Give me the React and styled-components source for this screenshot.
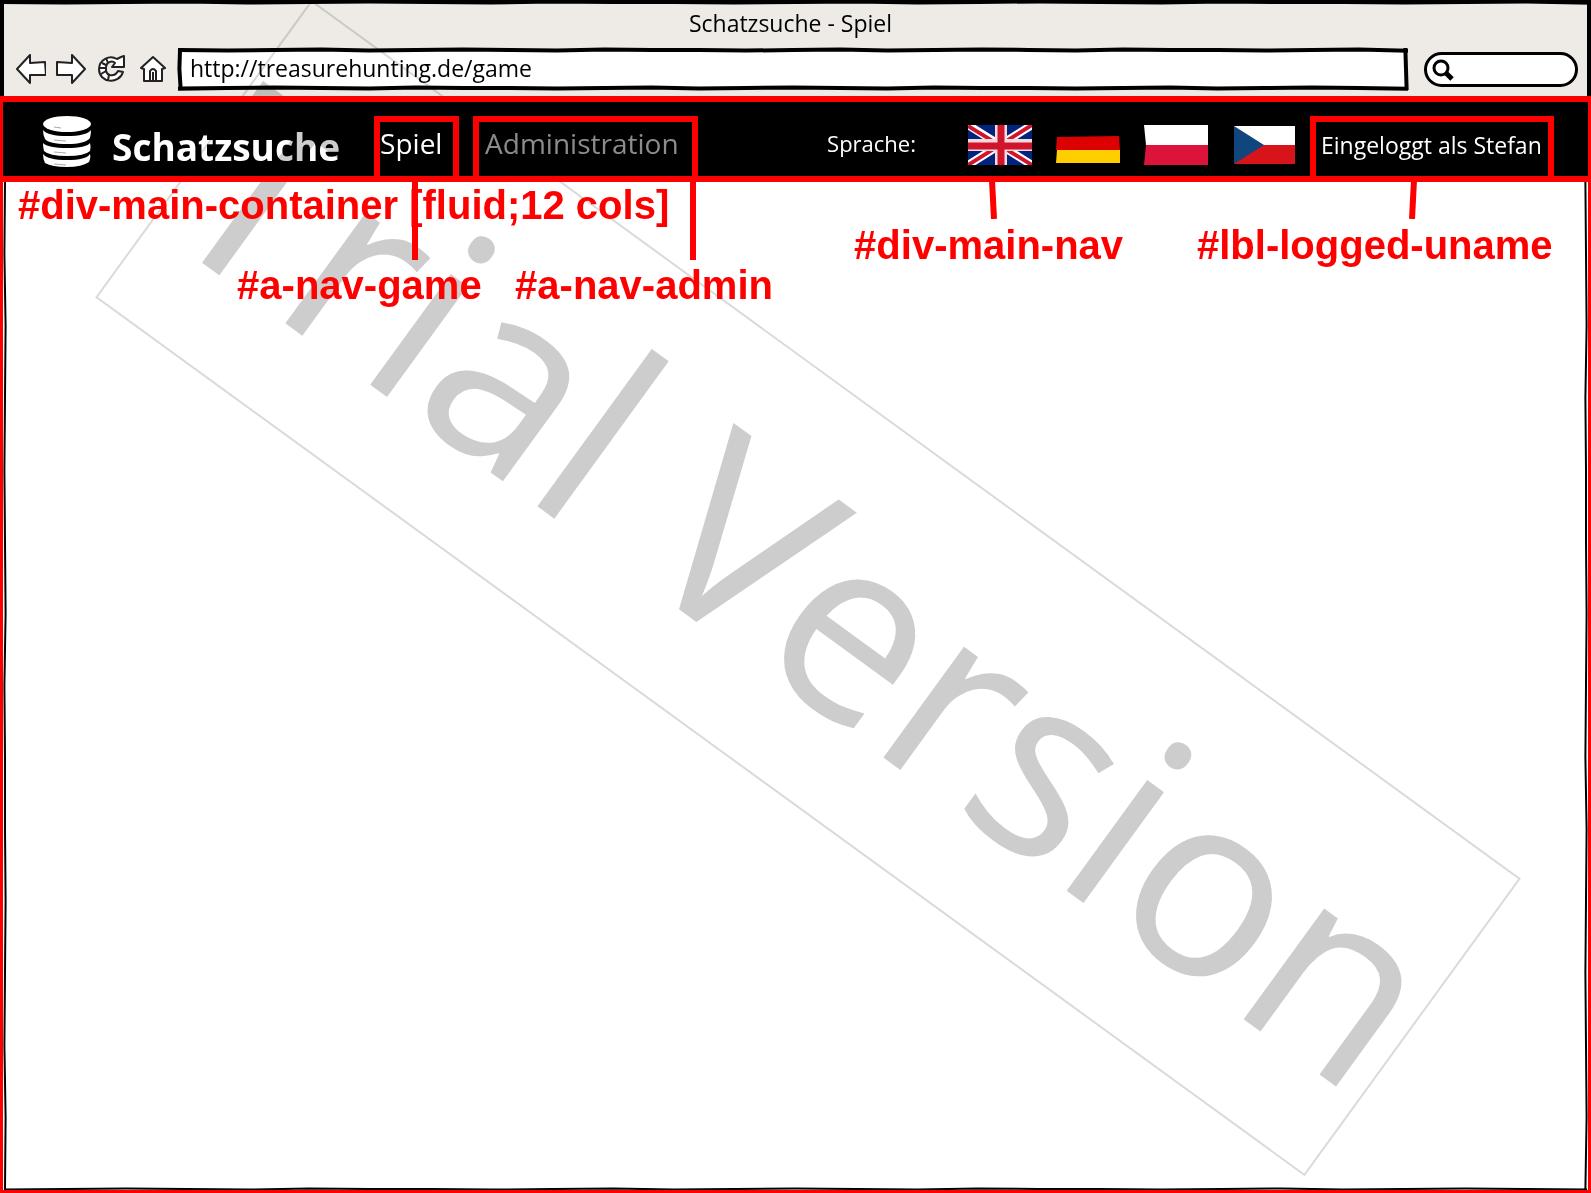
import React from "react";
import styled, { createGlobalStyle, css } from "styled-components";

const RED = "#ff0000";
const UI_FONT = '"Open Sans", "Noto Sans", sans-serif';
const NOTE_FONT = '"Liberation Sans", Arial, sans-serif';

const GlobalStyle = createGlobalStyle`
  *, *::before, *::after { box-sizing: border-box; }
  body { margin: 0; background: #fff; font-family: ${UI_FONT}; }
`;

/* ---------- page shell ---------- */

const Page = styled.div`
  position: relative;
  display: flex;
  flex-direction: column;
  min-height: 100vh;
  overflow: hidden;
  isolation: isolate;
  background: #fff;
`;

const Chrome = styled.header`
  position: relative;
  display: flex;
  flex-direction: column;
  height: 96px;
  background: #eeebe7;
  border-left: 4px solid #000;
  border-right: 4px solid #000;
`;

const WindowTitle = styled.div`
  padding: 7px 10px 0 0;
  font-size: 23px;
  line-height: 32px;
  text-align: center;
  color: #000;
`;

const Toolbar = styled.div`
  display: flex;
  align-items: center;
  gap: 14px;
  margin-top: 11px;
  padding: 0 9px 0 12px;
`;

const Actions = styled.div`
  display: flex;
  align-items: center;
  gap: 10px;
`;

const IconButton = styled.button`
  display: flex;
  padding: 0;
  border: 0;
  background: none;
  cursor: pointer;
`;

const Field = styled.label`
  position: relative;
  display: flex;
  align-items: center;
  height: 38px;
  flex: ${(p) => (p.$grow ? "1" : "0 0 auto")};
  ${(p) => p.$round && css`
    width: 154px;
    height: 35px;
    margin-left: 4px;
    padding-left: 36px;
    background: #fff;
    border: 3px solid #000;
    border-radius: 18px;
  `}
`;

const FieldInput = styled.input`
  width: 100%;
  min-width: 0;
  height: 100%;
  padding: 0 10px 2px;
  border: 0;
  outline: 0;
  background: ${(p) => (p.$clear ? "transparent" : "#fff")};
  font: 23px ${UI_FONT};
  color: #000;
`;

const SearchGlyph = styled.svg`
  position: absolute;
  left: 4px;
  top: 3px;
`;

const Sketch = styled.svg`
  position: absolute;
  inset: 0;
  width: 100%;
  height: 100%;
  overflow: visible;
  pointer-events: none;
`;

/* ---------- navigation ---------- */

const frame = css`
  &::after {
    content: "";
    position: absolute;
    inset: 0;
    z-index: 3;
    border: 6px solid ${RED};
    pointer-events: none;
  }
`;

const NavBar = styled.nav`
  position: relative;
  display: flex;
  align-items: stretch;
  height: 86px;
  padding: 20px 37px 0 42px;
  background: #000;
  color: #fff;
  ${frame}
  &::after { border-left-width: 3px; border-right-width: 3px; }
`;

const Brand = styled.a`
  display: flex;
  gap: 20px;
  color: #fff;
  font-size: 37px;
  font-weight: 700;
  line-height: 62px;
  text-decoration: none;
`;

const NavLinks = styled.div`
  display: flex;
  gap: 14px;
  margin-left: 34px;
`;

const NavLink = styled.a`
  position: relative;
  width: ${(p) => p.$width}px;
  padding-left: ${(p) => p.$pad}px;
  font-size: 28px;
  line-height: 54px;
  color: ${(p) => (p.$active ? "#fff" : "#8c8c8c")};
  text-decoration: none;
  white-space: nowrap;
  ${frame}
`;

const Languages = styled.div`
  position: relative;
  display: flex;
  gap: 52px;
  margin-left: auto;
  font-size: 22px;
  line-height: 54px;
`;

const Flags = styled.div`
  display: flex;
  align-items: flex-start;
  gap: 24px;
  padding-top: 9px;
`;

const Account = styled.div`
  position: relative;
  width: 244px;
  margin-left: 14px;
  padding-left: 11px;
  font-size: 23px;
  line-height: 58px;
  white-space: nowrap;
  ${frame}
`;

/* ---------- annotations ---------- */

const Note = styled.span`
  position: absolute;
  z-index: 3;
  top: ${(p) => p.$top}px;
  left: ${(p) => p.$left}px;
  font: 700 40px/46px ${NOTE_FONT};
  color: ${RED};
  white-space: nowrap;
`;

const Leader = styled.svg`
  position: absolute;
  z-index: 3;
  top: 66px;
  left: ${(p) => p.$left}px;
  stroke: ${RED};
  stroke-width: 6;
`;

const Content = styled.main`
  position: relative;
  flex: 1;
  &::after {
    content: "";
    position: absolute;
    inset: 0;
    z-index: 3;
    border: 3px solid ${RED};
    border-top: 0;
    pointer-events: none;
  }
`;

const ContentEdge = styled.div`
  position: absolute;
  inset: 0 5px 4px;
`;

const Watermark = styled.div`
  position: absolute;
  z-index: 2;
  left: calc(50% + 12px);
  top: calc(50% - 9px);
  width: 1495px;
  height: 368px;
  display: flex;
  justify-content: center;
  border: 2px solid #dadada;
  font-size: 256px;
  line-height: 352px;
  color: #cdcdcd;
  white-space: nowrap;
  mix-blend-mode: multiply;
  pointer-events: none;
  transform: translate(-50%, -50%) rotate(36deg);
`;

/* Hand-drawn line: runs from a to b with a small periodic wobble. */
const wobble = [0, 1, 0, -1, 1, 0, -1, 0, 1, -1, 0];

function edge(steps, horizontal, at, seed) {
  return Array.from({ length: steps + 1 }, (_, i) => {
    const along = (i / steps) * 1000;
    const off = at + wobble[(i + seed) % wobble.length] * 0.6;
    return horizontal ? [along, off] : [off, along];
  });
}

function SketchEdge({ sides = "trbl", width = 3, bends = 14 }) {
  const place = {
    t: { x: 0, y: 0, w: "100%", h: 6, pts: edge(26, true, 3, 0) },
    b: { x: 0, y: "100%", w: "100%", h: 6, pts: edge(26, true, 3, 4) },
    l: { x: 0, y: 0, w: 6, h: "100%", pts: edge(bends, false, 3, 2) },
    r: { x: "100%", y: 0, w: 6, h: "100%", pts: edge(bends, false, 3, 6) },
  };
  return (
    <Sketch aria-hidden="true">
      {sides.split("").map((s) => {
        const e = place[s];
        const flat = s === "t" || s === "b";
        return (
          <g key={s} transform={flat ? "translate(0 -3)" : "translate(-3 0)"}>
            <svg
              x={e.x}
              y={e.y}
              width={e.w}
              height={e.h}
              viewBox={flat ? "0 0 1000 6" : "0 0 6 1000"}
              preserveAspectRatio="none"
              overflow="visible"
            >
              <polyline
                points={e.pts.map((p) => p.join(",")).join(" ")}
                fill="none"
                stroke="#000"
                strokeWidth={width}
                strokeLinecap="square"
                vectorEffect="non-scaling-stroke"
              />
            </svg>
          </g>
        );
      })}
    </Sketch>
  );
}

/* ---------- drawings ---------- */

const line = { fill: "#fff", stroke: "#222", strokeWidth: 2, strokeLinejoin: "round" };

const BackIcon = () => (
  <svg width="30" height="30" viewBox="0 0 30 30" {...line}>
    <path d="M1 15 14 1l0 8 15-1 1 13-16 0v8Z" />
  </svg>
);

const ForwardIcon = () => (
  <svg width="30" height="30" viewBox="0 0 30 30" {...line}>
    <path d="M29 15 16 1l0 8-15-1 0 13 15 0 0 8Z" />
  </svg>
);

const ReloadIcon = () => (
  <svg width="30" height="30" viewBox="0 0 30 30" {...line}>
    <path d="M21 5A12 12 0 0 0 3 15c0 14 20 16 24 3l-5-1c-4 7-13 5-12-3 0-6 6-8 9-5l-3 4 12 0 0-11-3 1Z" />
    <path d="M6 9l4 2M4 14h5M5 20l5-3M10 4l2 5M12 26l1-5" fill="none" />
  </svg>
);

const HomeIcon = () => (
  <svg width="30" height="30" viewBox="0 0 30 30" {...line}>
    <path d="M5 14 17 3l12 11-3 1v12H8V15Z" />
    <path d="M14 26v-9q3-4 6 0v9M17 18v8" />
  </svg>
);

const CoinsIcon = () => (
  <svg width="50" height="54" viewBox="0 0 50 54" fill="#fff" aria-hidden="true">
    <ellipse cx="25" cy="8" rx="24" ry="8" />
    <path d="M1 14q5 6 24 6t24-6q0 3-1 8-5 6-23 6T3 23Q1 19 1 14Z" />
    <path d="M1 27q5 5 24 5t23-5q1 3 0 8-5 5-23 5T2 35Q1 31 1 27Z" />
    <path d="M1 38q5 6 24 6t23-6q1 3-1 8-7 5-22 5T3 47Q1 43 1 38Z" />
    <path d="M12 11l7 1M12 24l12 1M12 36l12 1M12 48l12 1" stroke="#aaa" />
  </svg>
);

const BritishFlag = () => (
  <svg width="64" height="40" viewBox="0 0 64 40">
    <path d="M0 0h64v40H0Z" fill="#00247d" />
    <path d="m0 0 64 40M64 0 0 40" stroke="#fff" strokeWidth="8" />
    <path d="m0 1 64 39M64 0 0 40" stroke="#cf142b" strokeWidth="4" />
    <path d="M33 0v40M0 20h64" stroke="#f4d9dd" strokeWidth="12" />
    <path d="M33 0v40M0 21h64" stroke="#cf142b" strokeWidth="7" />
  </svg>
);

const GermanFlag = () => (
  <svg width="64" height="40" viewBox="0 0 64 40">
    <path d="M0 0h64v12H0Z" fill="#000" />
    <path d="m1 12 62-1 1 14H0Z" fill="#dd0000" />
    <path d="m1 25 63 0v13H0Z" fill="#ffce00" />
  </svg>
);

const PolishFlag = () => (
  <svg width="64" height="40" viewBox="0 0 64 40">
    <path d="M0 0h64v20H2Z" fill="#fff" />
    <path d="M2 20h62v20H0Z" fill="#dc143c" />
  </svg>
);

const CzechFlag = () => (
  <svg width="64" height="40" viewBox="0 0 64 40">
    <path d="M2 1h61v19H2Z" fill="#fff" />
    <path d="M2 20h61v19H2Z" fill="#d7141a" />
    <path d="m2 1 30 19L2 39Z" fill="#11457e" />
  </svg>
);

const flags = [
  ["English", BritishFlag],
  ["Deutsch", GermanFlag],
  ["Polski", PolishFlag],
  ["Čeština", CzechFlag],
];

const actions = [
  ["Zurück", BackIcon],
  ["Vorwärts", ForwardIcon],
  ["Neu laden", ReloadIcon],
  ["Startseite", HomeIcon],
];

export default function App() {
  return (
    <Page>
      <GlobalStyle />
      <Chrome>
        <SketchEdge sides="t" width={8} />
        <WindowTitle>Schatzsuche - Spiel</WindowTitle>
        <Toolbar>
          <Actions>
            {actions.map(([name, Icon]) => (
              <IconButton key={name} type="button" aria-label={name}>
                <Icon />
              </IconButton>
            ))}
          </Actions>
          <Field $grow>
            <FieldInput aria-label="Adresse" defaultValue="http://treasurehunting.de/game" />
            <SketchEdge bends={2} width={4} />
          </Field>
          <Field $round>
            <SearchGlyph width="24" height="24" viewBox="0 0 24 24" fill="none" stroke="#000">
              <circle cx="10" cy="10" r="7" strokeWidth="3" />
              <path d="m15 15 6 6" strokeWidth="5" />
            </SearchGlyph>
            <FieldInput $clear type="search" aria-label="Suche" />
          </Field>
        </Toolbar>
      </Chrome>

      <NavBar>
        <Brand href="#start">
          <CoinsIcon />
          Schatzsuche
        </Brand>
        <NavLinks>
          <NavLink href="#game" $active $width={85} $pad={6}>
            Spiel
            <Leader $left={38} width="6" height="78"><path d="M3 0v78" /></Leader>
            <Note $left={-137} $top={146}>#a-nav-game</Note>
          </NavLink>
          <NavLink href="#admin" $width={225} $pad={12}>
            Administration
            <Leader $left={217} width="6" height="78"><path d="M3 0v78" /></Leader>
            <Note $left={42} $top={146}>#a-nav-admin</Note>
          </NavLink>
        </NavLinks>
        <Languages>
          <span>Sprache:</span>
          <Flags>
            {flags.map(([name, Flag]) => (
              <IconButton key={name} type="button" aria-label={name}>
                <Flag />
              </IconButton>
            ))}
          </Flags>
          <Leader $left={161} width="12" height="37"><path d="m4 -2 2 39" /></Leader>
          <Note $left={27} $top={106}>#div-main-nav</Note>
        </Languages>
        <Account>
          Eingeloggt als Stefan
          <Leader $left={97} width="12" height="37"><path d="m7 -2 -2 39" /></Leader>
          <Note $left={-113} $top={106}>#lbl-logged-uname</Note>
        </Account>
      </NavBar>

      <Content>
        <ContentEdge>
          <SketchEdge sides="lrb" width={2} />
        </ContentEdge>
        <Note $left={18} $top={0}>#div-main-container [fluid;12 cols]</Note>
      </Content>

      <Watermark>Trial Version</Watermark>
    </Page>
  );
}
